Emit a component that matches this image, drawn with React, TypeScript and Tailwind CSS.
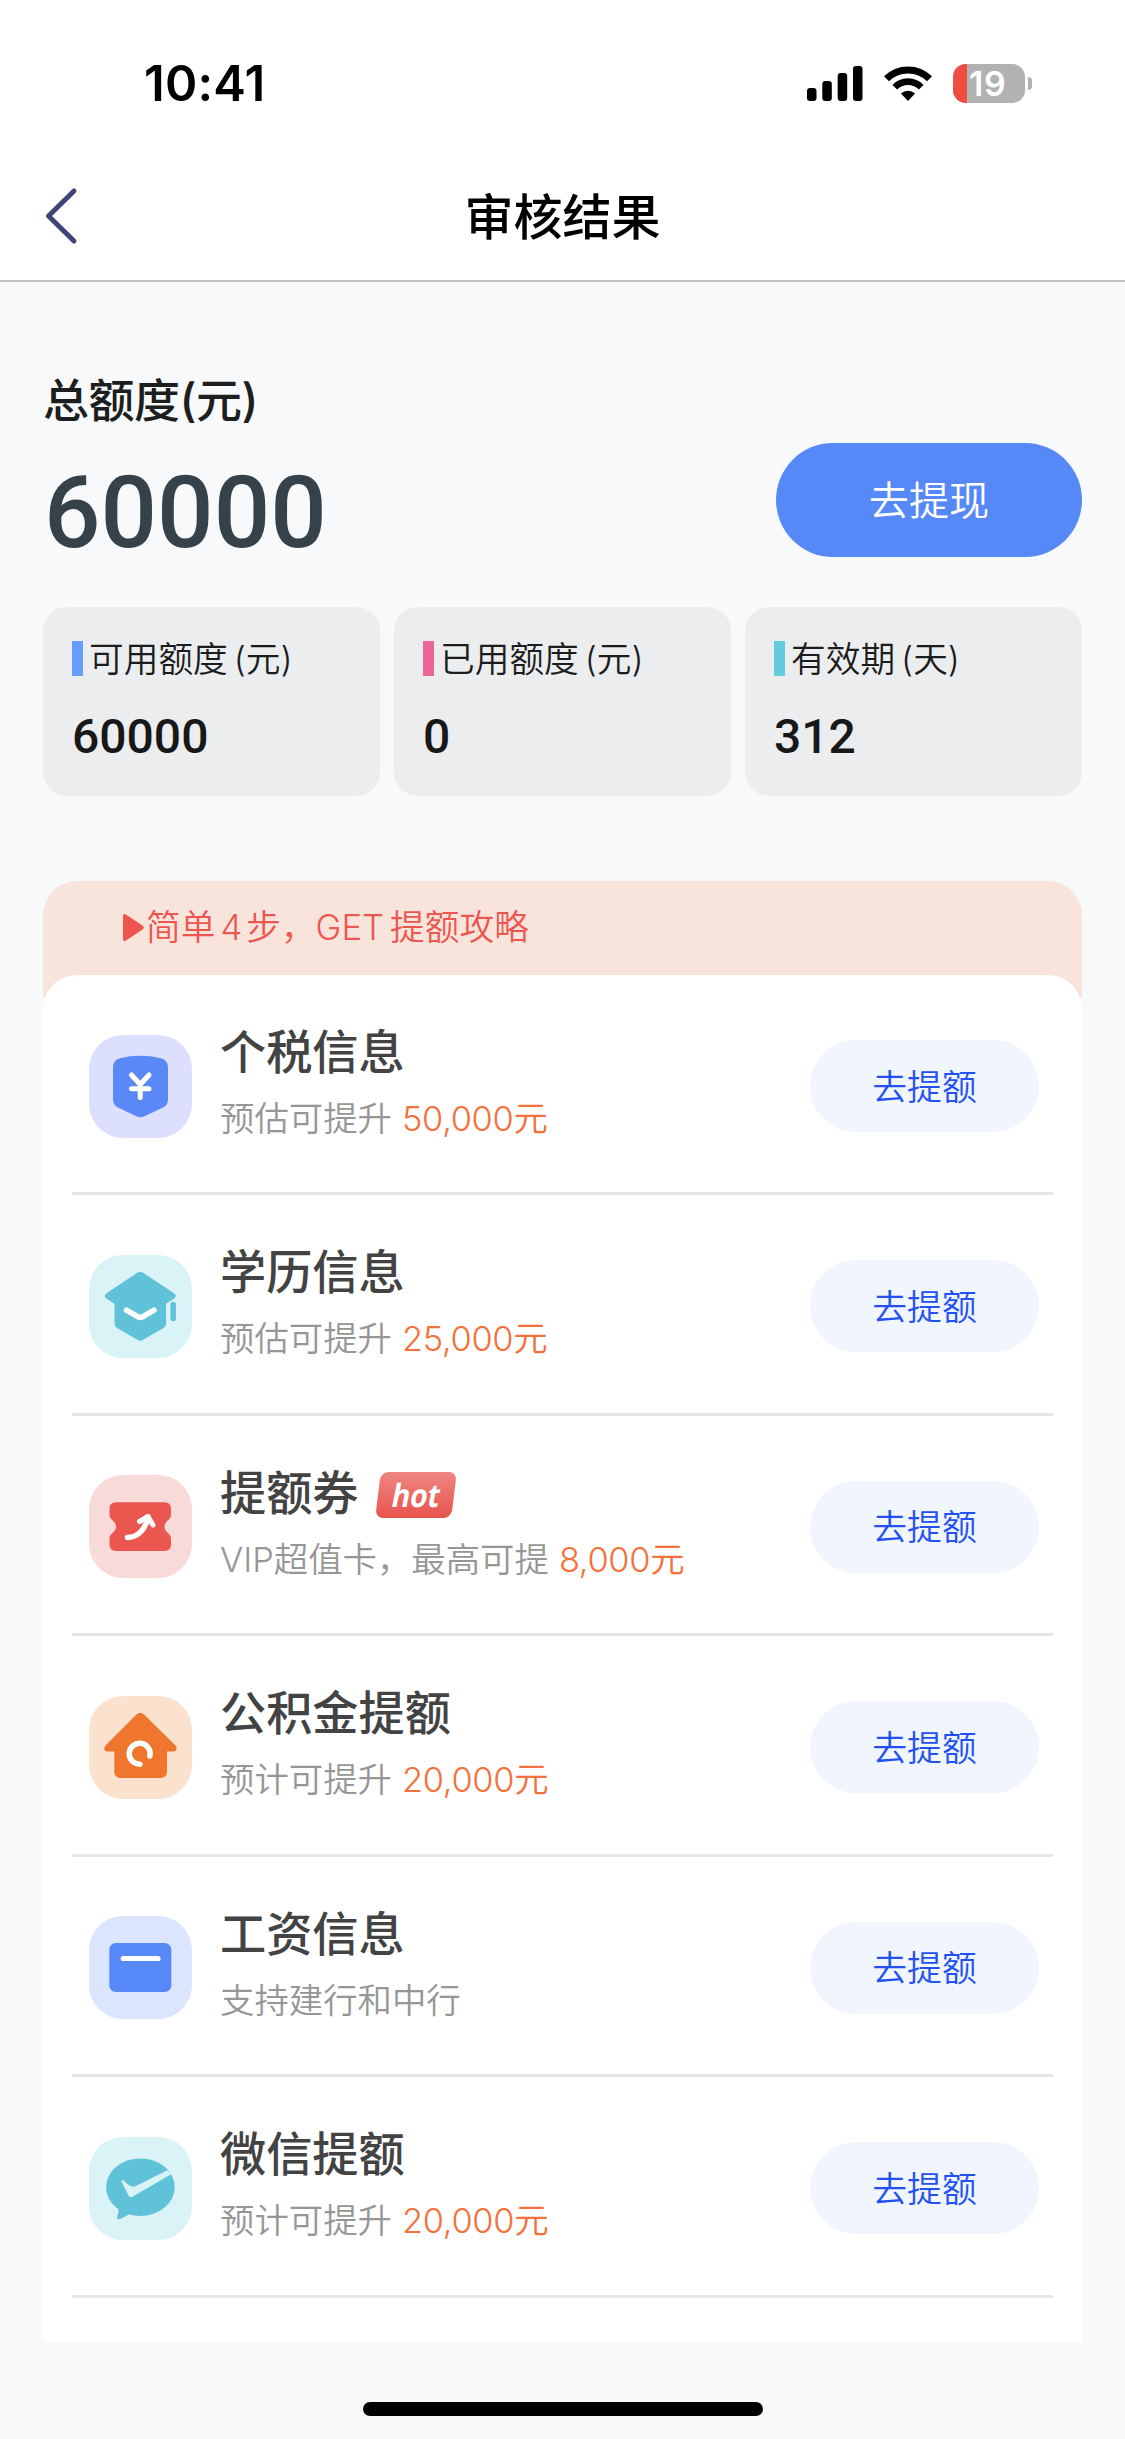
import type { ReactNode } from "react";

interface QuotaStat {
	label: string;
	unit: string;
	value: string;
	barClass: string;
}

interface BoostItem {
	id: string;
	title: string;
	desc: string;
	amount?: string;
	hot?: boolean;
	iconBg: string;
	icon: ReactNode;
}

const STATS: QuotaStat[] = [
	{ label: "可用额度", unit: "(元)", value: "60000", barClass: "bg-[#659efa]" },
	{ label: "已用额度", unit: "(元)", value: "0", barClass: "bg-[#ef6694]" },
	{ label: "有效期", unit: "(天)", value: "312", barClass: "bg-[#63cbdc]" },
];

const ITEMS: BoostItem[] = [
	{ id: "tax", title: "个税信息", desc: "预估可提升", amount: "50,000", iconBg: "bg-[#dcdffd]", icon: <TaxIcon /> },
	{ id: "edu", title: "学历信息", desc: "预估可提升", amount: "25,000", iconBg: "bg-[#daf3f7]", icon: <EducationIcon /> },
	{ id: "coupon", title: "提额券", desc: "VIP超值卡，最高可提", amount: "8,000", hot: true, iconBg: "bg-[#f8dad9]", icon: <CouponIcon /> },
	{ id: "fund", title: "公积金提额", desc: "预计可提升", amount: "20,000", iconBg: "bg-[#fbe2cf]", icon: <HouseIcon /> },
	{ id: "salary", title: "工资信息", desc: "支持建行和中行", iconBg: "bg-[#dbe5fe]", icon: <SalaryIcon /> },
	{ id: "wechat", title: "微信提额", desc: "预计可提升", amount: "20,000", iconBg: "bg-[#daf3f7]", icon: <WechatIcon /> },
];

function TaxIcon() {
	return (
		<svg viewBox="0 0 103 103" className="size-full">
			<path d="M31 23.200Q51.500 18.500 72 23.200Q79 25 79 32.500V64Q79 69.500 75 72L55 81.500Q51.500 83 48 81.500L28 72Q24 69.500 24 64V32.500Q24 25 31 23.200Z" fill="#5a88f6" />
			<path d="M42.500 40L51.200 49.500L60 40M51.200 49.500V62.500M42.500 53.800H60" fill="none" stroke="#fff" strokeWidth="5" strokeLinecap="round" strokeLinejoin="round" />
		</svg>
	);
}

function EducationIcon() {
	return (
		<svg viewBox="0 0 103 103" className="size-full">
			<path d="M47.500 18.200Q51.300 15.800 55 18.200L84.500 38Q89 41 84.500 44L77 48.800V68.500Q77 71.500 74.500 73L54.500 84.500Q51.300 87 48 84.500L28 73Q25.500 71.500 25.500 68.500V48.800L18 44Q13.500 41 18 38Z" fill="#60c2d9" />
			<path d="M37.500 55.200L49 61.800Q51.300 63 53.600 61.800L65 55.200" fill="none" stroke="#fff" strokeWidth="5.500" strokeLinecap="round" />
			<path d="M84.200 49.500V63.500" stroke="#60c2d9" strokeWidth="5.500" strokeLinecap="round" />
		</svg>
	);
}

function CouponIcon() {
	return (
		<svg viewBox="0 0 103 103" className="size-full">
			<path d="M27 27.300H75.500Q82 27.300 82 34V40C82 45 75.500 46 75.500 51.800C75.500 57.500 82 58.500 82 63.500V69.500Q82 76 75.500 76H27Q20.500 76 20.500 69.500V63.500C20.500 58.500 27 57.500 27 51.800C27 46 20.500 45 20.500 40V34Q20.500 27.300 27 27.300Z" fill="#eb564f" />
			<path d="M38.500 62.500C48 62.500 56.500 55 59 42" fill="none" stroke="#fff" strokeWidth="5.500" strokeLinecap="round" />
			<path d="M50.500 46.500L59 41.500L64 50" fill="none" stroke="#fff" strokeWidth="5" strokeLinecap="round" strokeLinejoin="round" />
		</svg>
	);
}

function HouseIcon() {
	return (
		<svg viewBox="0 0 103 103" className="size-full">
			<path d="M47.500 18.500Q51.300 15 55 18.500L86.500 49.500Q88.500 52 87.200 54Q86.500 55.500 84 55.500H78V75.500Q78 82 71.500 82H31.500Q25.300 82 25.300 75.500V55.500H19Q16.500 55.500 15.500 54Q14.500 52 16.500 49.500Z" fill="#ef762c" />
			<path d="M60.900 60A10.500 10.500 0 1 0 50.800 68.200" fill="none" stroke="#fff" strokeWidth="5.500" strokeLinecap="round" />
		</svg>
	);
}

function SalaryIcon() {
	return (
		<svg viewBox="0 0 103 103" className="size-full">
			<rect x="20.300" y="27" width="62" height="49" rx="6.500" fill="#5688f7" />
			<path d="M34.300 42.500H69" stroke="#fff" strokeWidth="5.200" strokeLinecap="round" />
		</svg>
	);
}

function WechatIcon() {
	return (
		<svg viewBox="0 0 103 103" className="size-full">
			<ellipse cx="51.400" cy="50.200" rx="34.300" ry="28.800" fill="#60c2d9" />
			<path d="M24 65Q30.500 71.500 29.500 75L28 80.500Q28.500 83 31 82L40 77.500Z" fill="#60c2d9" />
			<path d="M32.500 43.600Q33 42.600 34 43.300L40.500 48.600Q43.500 50.700 47 49L78 33.300L82.500 37L43.500 59.800Q40.700 61.200 39.500 58.500L33 45.600Q32.200 44.500 32.500 43.600Z" fill="#daf3f7" />
		</svg>
	);
}

function StatusBar() {
	return (
		<div className="flex h-[156px] items-start justify-between pr-[93px] pl-[144px] pt-[64px]">
			<span className="font-[Inter] text-[49px] leading-[40px] font-semibold tracking-[0.2px] text-black">10:41</span>
			<div className="flex h-[39px] items-center">
				<svg viewBox="0 0 56 35" className="h-[35px] w-[56px]">
					<rect x="0" y="22" width="9.500" height="13" rx="3" />
					<rect x="15.300" y="15" width="9.500" height="20" rx="3" />
					<rect x="30.700" y="7" width="9.500" height="28" rx="3" />
					<rect x="46" y="0" width="9.500" height="35" rx="3" />
				</svg>
				<svg viewBox="0 0 48 35" className="ml-[21px] h-[35px] w-[48px]" fill="none" stroke="#000">
					<path d="M2.500 12.800A30.500 30.500 0 0 1 45.500 12.800" strokeWidth="7" />
					<path d="M10.800 21.200A18.500 18.500 0 0 1 37.200 21.200" strokeWidth="6.600" />
					<path d="M17 27.500A10 10 0 0 1 31 27.500L24 35Z" fill="#000" stroke="none" />
				</svg>
				<div className="ml-[21px] flex h-[39px] w-[72px] items-center overflow-hidden rounded-[13px] bg-[#b2b2b2]">
					<div className="h-full w-[14px] shrink-0 bg-[#ee4d40]" />
					<span className="ml-[2px] font-[Inter] text-[34px] leading-none font-semibold tracking-[0.5px] text-white">19</span>
				</div>
				<div className="ml-[3px] h-[13px] w-[4px] rounded-r-full bg-[#b2b2b2]" />
			</div>
		</div>
	);
}

function NavBar() {
	return (
		<header className="grid h-[126px] grid-cols-[120px_1fr_120px] items-center border-b-2 border-[#c0c0c3] pb-[7px]">
			<button type="button" aria-label="返回" className="pt-[2px] pl-[44px]">
				<svg viewBox="0 0 34 58" className="h-[58px] w-[34px]" fill="none" stroke="#3f4578" strokeWidth="5" strokeLinecap="round" strokeLinejoin="round">
					<path d="M30 4L4.500 29L30 54" />
				</svg>
			</button>
			<h1 className="pt-[6px] text-center text-[49px] leading-none font-medium text-black">审核结果</h1>
		</header>
	);
}

function StatCard({ stat }: { stat: QuotaStat }) {
	return (
		<div className="h-[189px] rounded-[24px] bg-[#ecedee] pt-[34px] pl-[29px]">
			<div className="flex h-[35px] items-center text-[34.700px] leading-none font-[350] text-[#1b1c1e]">
				<span className={`mr-[6px] h-[35px] w-[11px] ${stat.barClass}`} />
				<span className="pt-[2px]">{stat.label}</span>
				<span className="ml-[6px] pt-[2px]">{stat.unit}</span>
			</div>
			<div className="mt-[36px] font-[Roboto] text-[48px] leading-[50px] font-medium text-[#17181a]">{stat.value}</div>
		</div>
	);
}

function HotBadge() {
	return (
		<span className="mt-[5px] ml-[19px] flex h-[46px] w-[76px] -skew-x-[7deg] items-center justify-center rounded-[8px] bg-linear-to-b from-[#ee8581] to-[#e9514c]">
			<span className="-skew-x-[5deg] scale-x-[0.88] font-['Open_Sans'] text-[32px] leading-none font-bold text-white">hot</span>
		</span>
	);
}

function BoostRow({ item }: { item: BoostItem }) {
	return (
		<li className="flex h-[220.450px] items-start border-b-3 border-[#e6e6e6] pr-[14px] pl-[17px]">
			<div className={`mt-[59.500px] size-[103px] shrink-0 rounded-[34px] ${item.iconBg}`}>{item.icon}</div>
			<div className="mt-[54px] ml-[28px] min-w-0 flex-1">
				<div className="flex h-[46px] items-center">
					<h2 className="text-[46.200px] leading-none font-medium whitespace-nowrap text-[#434343]">{item.title}</h2>
					{item.hot && <HotBadge />}
				</div>
				<p className="mt-[26px] flex h-[36px] items-center text-[34.400px] leading-none font-[350] whitespace-nowrap text-[#969696]">
					<span>{item.desc}</span>
					{item.amount && <span className="ml-[10px] tracking-[-0.3px] text-[#f4703c]">{item.amount}元</span>}
				</p>
			</div>
			<button type="button" className="mt-[65px] h-[92px] w-[229px] shrink-0 rounded-full bg-[#f0f5fe] pt-[2px] text-[34.800px] leading-none font-[350] text-[#2350f2]">
				去提额
			</button>
		</li>
	);
}

export default function App() {
	return (
		<div className="flex h-[2439px] w-[1125px] flex-col bg-[#f8f9fb] font-[Inter,'Noto_Sans_CJK_SC',sans-serif]">
			<div className="bg-white">
				<StatusBar />
				<NavBar />
			</div>

			<main className="px-[43px]">
				{/* Total quota */}
				<section className="flex h-[325px] justify-between">
					<div className="pt-[94px]">
						<div className="text-[46px] leading-[48px] font-medium tracking-[-0.5px] text-[#1c1e20]">总额度(元)</div>
						<div className="mt-[39px] ml-px font-[Roboto] text-[99.500px] leading-[100px] font-medium text-[#36424a]">60000</div>
					</div>
					<button type="button" className="mt-[161px] h-[114px] w-[306px] rounded-full bg-[#5688f7] pt-[3px] text-[40.200px] leading-none font-[350] text-white">
						去提现
					</button>
				</section>

				<section className="grid grid-cols-3 gap-[14px]">
					{STATS.map((stat) => (
						<StatCard key={stat.label} stat={stat} />
					))}
				</section>

				{/* Quota boost list */}
				<section className="mt-[85px]">
					<div className="flex h-[117px] items-start rounded-t-[34px] bg-[#f9e4dc] pt-[29px] pl-[80px] text-[#ec564f]">
						<svg viewBox="0 0 21 29" className="mt-[3px] h-[29px] w-[21px]" fill="currentColor">
							<path d="M0 3Q0 0 3 1.500L19.500 12.500Q22 14.500 19.500 16.500L3 27.500Q0 29 0 26Z" />
						</svg>
						<p className="ml-[2px] flex h-[35px] items-center text-[34.700px] leading-none font-[350] whitespace-nowrap">
							<span>简单</span>
							<span className="mr-[4px] ml-[5px]">4</span>
							<span>步，</span>
							<span className="mr-[6px]">GET</span>
							<span>提额攻略</span>
						</p>
					</div>
					<ul className="-mt-[23px] h-[1367px] rounded-t-[34px] bg-white px-[29px]">
						{ITEMS.map((item) => (
							<BoostRow key={item.id} item={item} />
						))}
					</ul>
				</section>
			</main>

			{/* Home indicator */}
			<div className="mx-auto mt-[60px] h-[14px] w-[400px] rounded-full bg-black" />
		</div>
	);
}
